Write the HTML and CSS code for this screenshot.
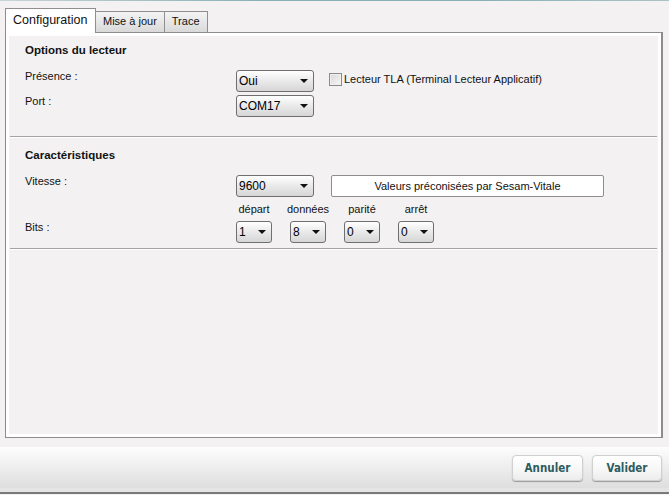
FILE: index.html
```html
<!DOCTYPE html>
<html lang="fr">
<head>
<meta charset="utf-8">
<title>Configuration</title>
<link rel="stylesheet" href="styles.css">
</head>
<body>
<div class="topline"></div>
<div class="main">
  <div class="tabs">
    <div class="tab active">Configuration</div>
    <div class="tab">Mise à jour</div>
    <div class="tab">Trace</div>
  </div>
  <div class="panel">
    <section class="group g1">
      <h2 class="heading">Options du lecteur</h2>
      <div class="row">
        <span class="label">Présence :</span>
        <div class="controls">
          <div class="select">Oui<span class="arrow"></span></div>
          <label class="check"><span class="box"></span>Lecteur TLA (Terminal Lecteur Applicatif)</label>
        </div>
      </div>
      <div class="row">
        <span class="label">Port :</span>
        <div class="controls">
          <div class="select">COM17<span class="arrow"></span></div>
        </div>
      </div>
    </section>
    <section class="group g2">
      <h2 class="heading">Caractéristiques</h2>
      <div class="row">
        <span class="label">Vitesse :</span>
        <div class="controls">
          <div class="select">9600<span class="arrow"></span></div>
          <div class="preset">Valeurs préconisées par Sesam-Vitale</div>
        </div>
      </div>
      <div class="row bits">
        <span class="label">Bits :</span>
        <div class="bitcols">
          <div class="bitcol"><span class="cap">départ</span><div class="select small">1<span class="arrow"></span></div></div>
          <div class="bitcol"><span class="cap">données</span><div class="select small">8<span class="arrow"></span></div></div>
          <div class="bitcol"><span class="cap">parité</span><div class="select small">0<span class="arrow"></span></div></div>
          <div class="bitcol"><span class="cap">arrêt</span><div class="select small">0<span class="arrow"></span></div></div>
        </div>
      </div>
    </section>
  </div>
</div>
<div class="footer">
  <div class="btn">Annuler</div>
  <div class="btn">Valider</div>
</div>
<div class="bottomline"></div>
</body>
</html>
```

FILE: styles.css
```css
html, body {
  margin: 0;
  padding: 0;
}
body {
  width: 669px;
  height: 495px;
  background: #f3f1f2;
  font-family: "Liberation Sans", Arial, sans-serif;
  font-size: 11px;
  color: #111;
  overflow: hidden;
}
.topline {
  height: 1px;
  background: linear-gradient(to right, #c8d4d6, #86b0b5 40%, #86b0b5 70%, #a9c3c6);
}
.main {
  padding: 7px 6px 0 5px;
}
.tabs {
  display: flex;
  align-items: flex-end;
  height: 24px;
}
.tab {
  box-sizing: border-box;
  height: 21px;
  padding: 0 7px;
  border: 1px solid #8f8f8f;
  border-bottom: none;
  border-left: none;
  background: linear-gradient(#f4f4f4, #d9d9d9);
  font-size: 11px;
  line-height: 19px;
  color: #111;
}
.tab.active {
  width: 91px;
  height: 25px;
  margin-bottom: -1px;
  border-left: 1px solid #8f8f8f;
  background: #fff;
  font-size: 12.5px;
  padding: 0 0 0 7px;
  line-height: 22px;
  position: relative;
  z-index: 1;
}
.panel {
  box-sizing: border-box;
  height: 406px;
  border: 1px solid #8c8c8c;
  border-right: 2px solid #8c8c8c;
  box-shadow: inset 0 0 0 3px #fff;
  padding: 0 4px;
}
.group {
  padding: 10px 0 0 15px;
  border-bottom: 1px solid #a3a3a3;
  box-shadow: 0 1px 0 #fff;
}
.g1 {
  padding-bottom: 16px;
}
.g2 {
  padding-top: 11px;
  padding-bottom: 2px;
}
.heading {
  margin: 0 0 13px;
  font-size: 11.5px;
  font-weight: bold;
  line-height: 14px;
}
.row {
  display: grid;
  grid-template-columns: 211px auto;
  align-items: start;
  margin-bottom: 3px;
}
.label {
  line-height: 13px;
  padding-top: 0;
}
.controls {
  display: flex;
  align-items: center;
}
.select {
  position: relative;
  box-sizing: border-box;
  width: 78px;
  height: 22px;
  border: 1px solid #6f6f6f;
  border-radius: 3px;
  background: linear-gradient(#ffffff, #e9e9e9 50%, #d6d6d6);
  font-size: 12px;
  line-height: 20px;
  padding-left: 2px;
  color: #000;
}
.select.small {
  width: 36px;
}
.arrow {
  position: absolute;
  right: 5px;
  top: 8px;
  width: 0;
  height: 0;
  border-left: 4px solid transparent;
  border-right: 4px solid transparent;
  border-top: 4px solid #111;
}
.check {
  display: flex;
  align-items: center;
  margin-left: 15px;
  margin-top: -4px;
  font-size: 11px;
}
.box {
  box-sizing: border-box;
  width: 13px;
  height: 13px;
  margin-right: 2px;
  border: 1px solid #8a8a8a;
  background: linear-gradient(135deg, #d9d9d9, #f7f7f7);
  box-shadow: inset 0 0 0 1px #f0f0f0;
}
.preset {
  box-sizing: border-box;
  width: 273px;
  height: 22px;
  margin-left: 17px;
  border: 1px solid #8e8e8e;
  border-radius: 2px;
  background: #fff;
  text-align: center;
  line-height: 20px;
  font-size: 11px;
  color: #111;
}
.bits {
  margin-top: 6px;
}
.bits .label {
  padding-top: 18px;
}
.bitcols {
  display: flex;
  gap: 18px;
}
.bitcol {
  display: flex;
  flex-direction: column;
  align-items: center;
  width: 36px;
}
.cap {
  line-height: 13px;
  margin-bottom: 5px;
  white-space: nowrap;
}
.footer {
  margin-top: 9px;
  height: 41px;
  box-sizing: border-box;
  background: linear-gradient(#fdfdfd, #dedede);
  display: flex;
  justify-content: flex-end;
  align-items: flex-start;
  gap: 9px;
  padding: 8px 7px 0 0;
}
.btn {
  box-sizing: border-box;
  width: 71px;
  height: 26px;
  border: 1px solid #d0d0d0;
  border-radius: 4px;
  background: linear-gradient(#ffffff, #f6f6f6 60%, #ececec);
  box-shadow: 0 1px 1px #9a9a9a;
  text-align: center;
  font-family: "DejaVu Sans Condensed", "DejaVu Sans", sans-serif;
  font-stretch: condensed;
  font-weight: bold;
  font-size: 11.5px;
  line-height: 24px;
  color: #2e5b5f;
}
.btn + .btn {
  width: 70px;
}
.bottomline {
  height: 4px;
  background: #e4e4e4;
  border-bottom: 2px solid #7a7a7a;
}
```
